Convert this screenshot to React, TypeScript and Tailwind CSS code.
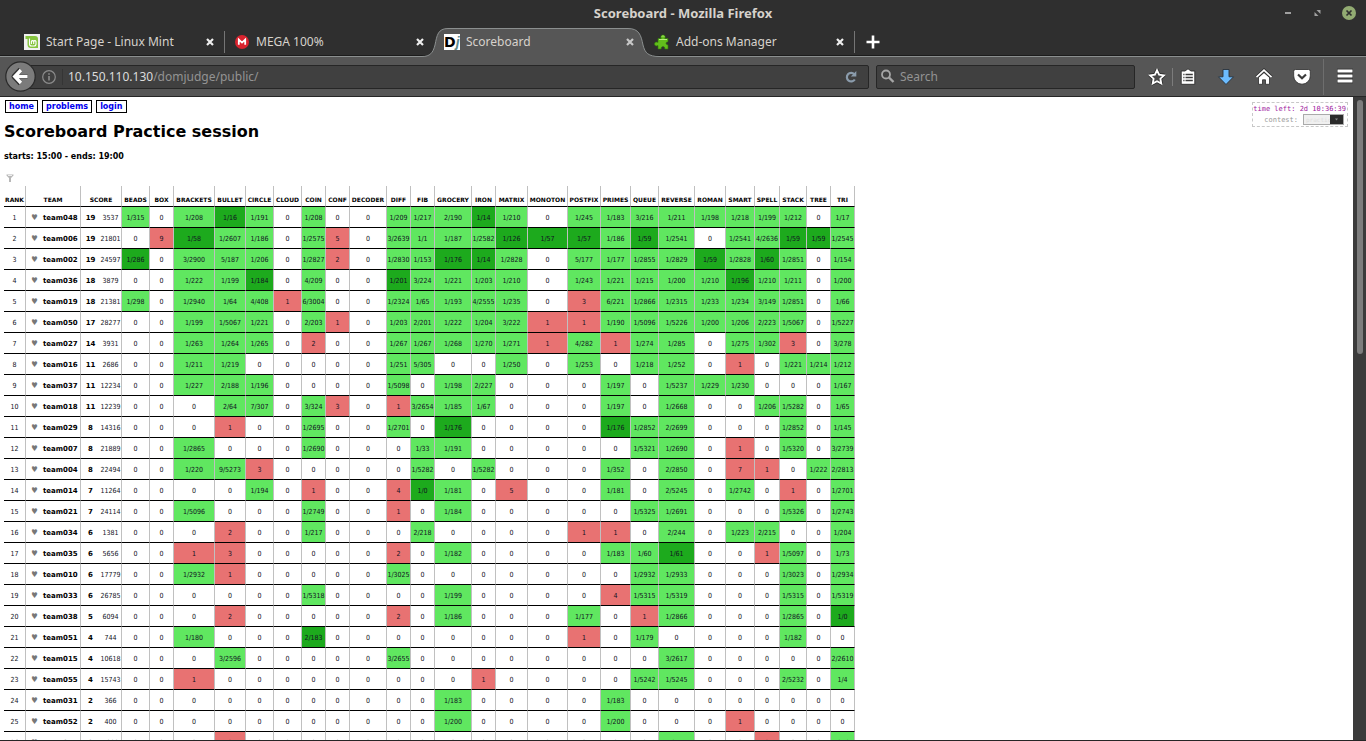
import type { ReactNode } from "react";

const PROBLEMS: [string, string][] = [
  ["BEADS", "w-[28px]"],
  ["BOX", "w-[24px]"],
  ["BRACKETS", "w-[41px]"],
  ["BULLET", "w-[31px]"],
  ["CIRCLE", "w-[28px]"],
  ["CLOUD", "w-[28px]"],
  ["COIN", "w-[24px]"],
  ["CONF", "w-[24px]"],
  ["DECODER", "w-[37px]"],
  ["DIFF", "w-[24px]"],
  ["FIB", "w-[24px]"],
  ["GROCERY", "w-[37px]"],
  ["IRON", "w-[24px]"],
  ["MATRIX", "w-[32px]"],
  ["MONOTON", "w-[40px]"],
  ["POSTFIX", "w-[33px]"],
  ["PRIMES", "w-[30px]"],
  ["QUEUE", "w-[28px]"],
  ["REVERSE", "w-[36px]"],
  ["ROMAN", "w-[31px]"],
  ["SMART", "w-[29px]"],
  ["SPELL", "w-[25px]"],
  ["STACK", "w-[27px]"],
  ["TREE", "w-[24px]"],
  ["TRI", "w-[24px]"],
];

// team, solved, time, then one result per problem.
// "tries/time" is solved, a leading * marks the first solver, a bare count is unsolved.
const ROWS = [
  "team048 19 3537 1/315 0 1/208 *1/16 1/191 0 1/208 0 0 1/209 1/217 2/190 *1/14 1/210 0 1/245 1/183 3/216 1/211 1/198 1/218 1/199 1/212 0 1/17",
  "team006 19 21801 0 9 *1/58 1/2607 1/186 0 1/2575 5 0 3/2639 1/1 1/187 1/2582 *1/126 *1/57 *1/57 1/186 *1/59 1/2541 0 1/2541 4/2636 *1/59 *1/59 1/2545",
  "team002 19 24597 *1/286 0 3/2900 5/187 1/206 0 1/2827 2 0 1/2830 1/153 *1/176 *1/14 1/2828 0 5/177 1/177 1/2855 1/2829 *1/59 1/2828 *1/60 1/2851 0 1/154",
  "team036 18 3879 0 0 1/222 1/199 *1/184 0 4/209 0 0 *1/201 3/224 1/221 1/203 1/210 0 1/243 1/221 1/215 1/200 1/210 *1/196 1/210 1/211 0 1/200",
  "team019 18 21381 1/298 0 1/2940 1/64 4/408 1 6/3004 0 0 1/2324 1/65 1/193 4/2555 1/235 0 3 6/221 1/2866 1/2315 1/233 1/234 3/149 1/2851 0 1/66",
  "team050 17 28277 0 0 1/199 1/5067 1/221 0 2/203 1 0 1/203 2/201 1/222 1/204 3/222 1 1 1/190 1/5096 1/5226 1/200 1/206 2/223 1/5067 0 1/5227",
  "team027 14 3931 0 0 1/263 1/264 1/265 0 2 0 0 1/267 1/267 1/268 1/270 1/271 1 4/282 1 1/274 1/285 0 1/275 1/302 3 0 3/278",
  "team016 11 2686 0 0 1/211 1/219 0 0 0 0 0 1/251 5/305 0 0 1/250 0 1/253 0 1/218 1/252 0 1 0 1/221 1/214 1/212",
  "team037 11 12234 0 0 1/227 2/188 1/196 0 0 0 0 1/5098 0 1/198 2/227 0 0 0 1/197 0 1/5237 1/229 1/230 0 0 0 1/167",
  "team018 11 12239 0 0 0 2/64 7/307 0 3/324 3 0 1 3/2654 1/185 1/67 0 0 0 1/197 0 1/2668 0 0 1/206 1/5282 0 1/65",
  "team029 8 14316 0 0 0 1 0 0 1/2695 0 0 1/2701 0 *1/176 0 0 0 0 *1/176 1/2852 2/2699 0 0 0 1/2852 0 1/145",
  "team007 8 21889 0 0 1/2865 0 0 0 1/2690 0 0 0 1/33 1/191 0 0 0 0 0 1/5321 1/2690 0 1 0 1/5320 0 3/2739",
  "team004 8 22494 0 0 1/220 9/5273 3 0 0 0 0 0 1/5282 0 1/5282 0 0 0 1/352 0 2/2850 0 7 1 0 1/222 2/2813",
  "team014 7 11264 0 0 0 0 1/194 0 1 0 0 4 *1/0 1/181 0 5 0 0 1/181 0 2/5245 0 1/2742 0 1 0 1/2701",
  "team021 7 24114 0 0 1/5096 0 0 0 1/2749 0 0 1 0 1/184 0 0 0 0 0 1/5325 1/2691 0 0 0 1/5326 0 1/2743",
  "team034 6 1381 0 0 0 2 0 0 1/217 0 0 0 2/218 0 0 0 0 1 1 0 2/244 0 1/223 2/215 0 0 1/204",
  "team035 6 5656 0 0 1 3 0 0 0 0 0 2 0 1/182 0 0 0 0 1/183 1/60 *1/61 0 0 1 1/5097 0 1/73",
  "team010 6 17779 0 0 1/2932 1 0 0 0 0 0 1/3025 0 0 0 0 0 0 0 1/2932 1/2933 0 0 0 1/3023 0 1/2934",
  "team033 6 26785 0 0 0 0 0 0 1/5318 0 0 0 0 1/199 0 0 0 0 4 1/5315 1/5319 0 0 0 1/5315 0 1/5319",
  "team038 5 6094 0 0 0 2 0 0 0 0 0 2 0 1/186 0 0 0 1/177 0 1 1/2866 0 0 0 1/2865 0 *1/0",
  "team051 4 744 0 0 1/180 0 0 0 *2/183 0 0 0 0 0 0 0 0 1 0 1/179 0 0 0 0 1/182 0 0",
  "team015 4 10618 0 0 0 3/2596 0 0 0 0 0 3/2655 0 0 0 0 0 0 0 0 3/2617 0 0 0 0 0 2/2610",
  "team055 4 15743 0 0 1 0 0 0 0 0 0 0 0 0 1 0 0 0 0 1/5242 1/5245 0 0 0 2/5232 0 1/4",
  "team031 2 366 0 0 0 0 0 0 0 0 0 0 0 1/183 0 0 0 0 1/183 0 0 0 0 0 0 0 0",
  "team052 2 400 0 0 0 0 0 0 0 0 0 0 0 1/200 0 0 0 0 1/200 0 0 0 1 0 0 0 0",
  "team017 2 5080 0 0 0 2 0 0 0 0 0 0 0 0 0 0 0 0 0 0 1/2477 0 0 2 0 0 1/2484",
].map((r) => r.split(" "));

function tone(v: string) {
  if (v === "0") return "";
  if (v.startsWith("*")) return "bg-[#1daa1d]";
  return v.includes("/") ? "bg-[#60e760]" : "bg-[#e87272]";
}

const MintIcon = () => (
  <svg width="16" height="16" viewBox="0 0 16 16">
    <rect width="16" height="16" fill="#f0f0f0" />
    <path d="M1.5 2H11a3 3 0 0 1 3 3v9H7a3.500 3.500 0 0 1-3.500-3.500V5h-2z" fill="#86c43f" />
    <path d="M5.500 4.500v5.500a2 2 0 0 0 2 2h2.500a2 2 0 0 0 2-2V7.500a1.200 1.200 0 0 0-2.300 0V10M9.700 7.500a1.200 1.200 0 0 0-2.300 0V10" fill="none" stroke="#fff" strokeWidth="1.100" />
  </svg>
);

const MegaIcon = () => (
  <svg width="16" height="16" viewBox="0 0 16 16">
    <circle cx="8" cy="8" r="7" fill="#d9232e" />
    <path d="M4.800 10.800V5.600L8 8.600l3.200-3v5.200" fill="none" stroke="#fff" strokeWidth="1.800" />
  </svg>
);

const DjIcon = () => (
  <span className="flex size-4 items-center overflow-hidden bg-white font-['DejaVu_Sans'] text-[14px] leading-4 font-bold text-black">
    D<i className="font-['Liberation_Sans'] text-[14px] font-bold text-[#5f8a8c]">j</i>
  </span>
);

const AddonIcon = () => (
  <svg width="16" height="16" viewBox="0 0 16 16">
    <path
      d="M4 4.500h3.200C6.600 3.600 6.500 1 9 1s2.500 2.600 1.800 3.500H14v3.200c-.8.300-2 .3-2 1.600s1.200 1.300 2 1.600V15h-3.200c.3-1.500-.4-2.500-1.800-2.500S7 13.500 7.200 15H4v-3.500C3 12.200.500 12.200.500 10S3 7.800 4 8.500z"
      fill="#62bd1c"
      stroke="#2f7a08"
      strokeWidth=".6"
    />
    <path d="M7.800 2.600a1.400 1.400 0 0 1 2.400 0M5 5.500h8" stroke="#b6ec7c" strokeWidth="1" fill="none" />
  </svg>
);

function Tab({ icon, title, active, divider }: { icon: ReactNode; title: string; active?: boolean; divider?: boolean }) {
  return (
    <div role="tab" aria-selected={!!active} className="relative h-[29px] w-[210px] shrink-0">
      {active && (
        <svg className="absolute top-0 -left-[12px]" width="238" height="30" viewBox="0 0 238 30">
          <path
            d="M0 28.500C8 28.500 11 25 13 17C15 7 16 .5 26 .5H206C217 .5 219 7 221 17C223 25 226 28.500 238 28.500V30H0Z"
            fill="#565656"
          />
          <path
            d="M0 28.500C8 28.500 11 25 13 17C15 7 16 .5 26 .5H206C217 .5 219 7 221 17C223 25 226 28.500 238 28.500"
            fill="none"
            stroke="#8b8f8f"
          />
        </svg>
      )}
      <div className="relative flex h-7 items-center gap-1.5 pr-2.5 pl-2.5">
        {icon}
        <span className="flex-1 text-[12px] whitespace-nowrap text-[#d6d2cc]">{title}</span>
        <button aria-label="Close tab" className="flex size-2 items-center justify-center">
          <svg width="8" height="8" viewBox="0 0 8 8" className="shrink-0">
            <path d="M1 1l6 6M7 1L1 7" stroke={active ? "#c8c8c8" : "#eee"} strokeWidth="2.200" />
          </svg>
        </button>
      </div>
      {divider && <span className="absolute top-[3px] -right-px h-[22px] w-px bg-[#757575]" />}
    </div>
  );
}

function IconButton({ label, children }: { label: string; children: ReactNode }) {
  return (
    <button aria-label={label} className="flex w-[18px] items-center justify-center">
      {children}
    </button>
  );
}

function Chrome() {
  return (
    <header className="shrink-0 bg-[#2f2f2f] font-['Noto_Sans',sans-serif]">
      <div className="relative flex h-7 items-center justify-center">
        <h2 className="text-[13px] font-bold text-[#d6d2cc]">Scoreboard - Mozilla Firefox</h2>
        <div className="absolute top-[6px] right-[10px] flex items-center gap-[21px]">
          <button aria-label="Minimize">
            <svg width="8" height="14" viewBox="0 0 8 14">
              <path d="M1 7h6" stroke="#a0a0a0" strokeWidth="2" />
            </svg>
          </button>
          <button aria-label="Restore">
            <svg width="8" height="14" viewBox="0 0 8 14">
              <path d="M3.500 4h4v4zM1.500 6v4h4z" fill="#a0a0a0" />
            </svg>
          </button>
          <button aria-label="Close">
            <svg width="14" height="14" viewBox="0 0 14 14">
              <circle cx="7" cy="7" r="7" fill="#92ab72" />
              <path d="M4.500 4.500l5 5M9.500 4.500l-5 5" stroke="#2f2f2f" strokeWidth="1.700" />
            </svg>
          </button>
        </div>
      </div>

      <div role="tablist" className="relative flex h-[29px] pl-[14px]">
        <span className="absolute inset-x-0 bottom-px h-px bg-[#1c1c1c]" />
        <span className="absolute inset-x-0 bottom-0 h-px bg-[#8b8f8f]" />
        <Tab icon={<MintIcon />} title="Start Page - Linux Mint" divider />
        <Tab icon={<MegaIcon />} title="MEGA 100%" />
        <Tab icon={<DjIcon />} title="Scoreboard" active />
        <Tab icon={<AddonIcon />} title="Add-ons Manager" divider />
        <button aria-label="New tab" className="ml-px flex h-7 w-9 items-center justify-center">
          <svg width="14" height="14" viewBox="0 0 14 14">
            <path d="M7 .5v13M.5 7h13" stroke="#fff" strokeWidth="2.600" />
          </svg>
        </button>
      </div>

      <div className="flex h-10 items-center border-b border-[#262626] bg-[#565656] pr-3 pl-[5px]">
        <button aria-label="Back" className="relative z-10 shrink-0">
          <svg width="31" height="31" viewBox="0 0 31 31">
            <circle cx="15.500" cy="15.500" r="14.700" fill="#7b7b7b" stroke="#292929" strokeWidth="1.200" />
            <path d="M15.500 8.500l-6.500 7 6.500 7M9.500 15.500H22.500" fill="none" stroke="#333" strokeWidth="5" strokeLinejoin="round" />
            <path d="M16 9l-6.200 6.500L16 22M10 15.500h12.500" fill="none" stroke="#fff" strokeWidth="3.400" />
          </svg>
        </button>
        <div className="-ml-4 flex h-6 flex-1 items-center rounded-[2px] border border-[#262626] bg-[#404040] pr-2.5 pl-5">
          <svg width="16" height="16" viewBox="0 0 16 16" className="shrink-0">
            <circle cx="8" cy="8" r="6.300" fill="none" stroke="#8c8c8c" strokeWidth="1.200" />
            <path d="M8 7v4.500M8 4.200v1.600" stroke="#8c8c8c" strokeWidth="1.600" />
          </svg>
          <span className="ml-[5px] h-4 w-px bg-[#353535]" />
          <div className="ml-[5px] flex-1 text-[12px] whitespace-nowrap text-[#939393]">
            <span className="text-[#dcdcdc]">10.150.110.130</span>/domjudge/public/
          </div>
          <button aria-label="Reload">
            <svg width="14" height="14" viewBox="0 0 14 14">
              <path d="M10.300 4.200A4.300 4.300 0 1 0 10.800 9.500" fill="none" stroke="#8b9cac" strokeWidth="2.200" />
              <path d="M12.300 1v5.600H6.800z" fill="#8b9cac" />
            </svg>
          </button>
        </div>
        <div className="ml-[7px] flex h-6 w-[259px] items-center rounded-[2px] border border-[#262626] bg-[#404040] pl-[3px]">
          <svg width="15" height="15" viewBox="0 0 15 15" className="shrink-0">
            <circle cx="6" cy="5.500" r="4" fill="none" stroke="#a6a6a6" strokeWidth="1.800" />
            <path d="M9 8.500l4.500 4.500" stroke="#a6a6a6" strokeWidth="2.400" />
          </svg>
          <input
            aria-label="Search"
            placeholder="Search"
            className="ml-[5px] w-full bg-transparent text-[12px] outline-none placeholder:text-[#939393]"
          />
        </div>
        <div className="ml-[13px] flex h-9 items-center">
          <IconButton label="Bookmark this page">
            <svg width="18" height="18" viewBox="0 0 18 18" className="shrink-0">
              <path
                d="M9 2.200l2.100 4.500 4.900.6-3.600 3.400.9 4.900L9 13.200l-4.300 2.400.9-4.900L2 7.300l4.900-.6z"
                fill="none"
                stroke="#2b2b2b"
                strokeWidth="3.400"
                strokeLinejoin="round"
              />
              <path
                d="M9 2.200l2.100 4.500 4.900.6-3.600 3.400.9 4.900L9 13.200l-4.300 2.400.9-4.900L2 7.300l4.900-.6z"
                fill="#4a4a4a"
                stroke="#fff"
                strokeWidth="1.800"
              />
            </svg>
          </IconButton>
          <span className="ml-[6px] h-[18px] w-px bg-[#7c7c7c]" />
          <span className="w-[6px]" />
          <IconButton label="Bookmarks list">
            <svg width="18" height="18" viewBox="0 0 18 18" className="shrink-0">
              <path d="M6 3L9 .8 12 3h3.800v13.300H2.200V3z" fill="#fff" stroke="#2b2b2b" strokeWidth=".9" />
              <path d="M4.300 6.500h1.200M4.300 9.500h1.200M4.300 12.500h1.200M6.500 6.500h7.300M6.500 9.500h7.300M6.500 12.500h7.300" stroke="#3b3b3b" strokeWidth="1.300" />
            </svg>
          </IconButton>
          <span className="w-5" />
          <IconButton label="Downloads">
            <svg width="18" height="18" viewBox="0 0 18 18" className="shrink-0">
              <path d="M6 1.500h6v7.300h4.500L9 16.500 1.500 8.800H6z" fill="#6cbcff" stroke="#29323b" strokeWidth=".9" strokeLinejoin="round" />
            </svg>
          </IconButton>
          <span className="w-5" />
          <IconButton label="Home">
            <svg width="18" height="18" viewBox="0 0 18 18" className="shrink-0">
              <path d="M3.500 9.500L9 4.600l5.500 4.900v6.800h-4v-4.500h-3v4.500h-4z" fill="#fff" stroke="#2b2b2b" strokeWidth=".8" />
              <path d="M1.500 9.200L9 2.200l7.500 7" fill="none" stroke="#2b2b2b" strokeWidth="3.200" />
              <path d="M1.500 9.200L9 2.200l7.500 7" fill="none" stroke="#fff" strokeWidth="1.800" />
            </svg>
          </IconButton>
          <span className="w-5" />
          <IconButton label="Pocket">
            <svg width="18" height="18" viewBox="0 0 18 18" className="shrink-0">
              <path d="M2.500 1.500h13a1.800 1.800 0 0 1 1.800 1.800v4.600a8.300 8.300 0 0 1-16.600 0V3.300a1.800 1.800 0 0 1 1.800-1.800z" fill="#fff" stroke="#2b2b2b" strokeWidth=".8" />
              <path d="M5 6.500l4 3.800 4-3.800" fill="none" stroke="#3b3b3b" strokeWidth="2.200" />
            </svg>
          </IconButton>
          <span className="ml-3 h-9 w-px bg-[#6e6e6e]" />
          <span className="w-[12px]" />
          <IconButton label="Open menu">
            <svg width="18" height="18" viewBox="0 0 18 18" className="shrink-0">
              <path d="M1 3h16M1 8h16M1 13h16" stroke="#2b2b2b" strokeWidth="4.400" />
              <path d="M1.500 3h15M1.500 8h15M1.500 13h15" stroke="#fff" strokeWidth="3" />
            </svg>
          </IconButton>
        </div>
      </div>
    </header>
  );
}

const CELL = "border-r border-b border-r-[#c0c0c0] border-b-black p-0 text-center whitespace-nowrap";

function Scoreboard() {
  return (
    <table className="mt-1 w-px table-fixed border-separate border-spacing-0 font-['DejaVu_Sans_Condensed','DejaVu_Sans',sans-serif] text-[7px] leading-[8px] text-[#112]">
      <colgroup>
        <col className="w-[22px]" />
        <col className="w-[17px]" />
        <col className="w-[38px]" />
        <col className="w-[19px]" />
        <col className="w-[22px]" />
        {PROBLEMS.map(([name, width]) => (
          <col key={name} className={width} />
        ))}
      </colgroup>
      <thead>
        <tr className="h-[21px] font-['DejaVu_Sans',sans-serif] text-[6px] font-bold text-black">
          <th className={`${CELL} pt-2`}>RANK</th>
          <th colSpan={2} className={`${CELL} pt-2`}>TEAM</th>
          <th colSpan={2} className={`${CELL} pt-2`}>SCORE</th>
          {PROBLEMS.map(([name]) => (
            <th key={name} className={`${CELL} pt-2`}>
              <div className="flex justify-center">{name}</div>
            </th>
          ))}
        </tr>
      </thead>
      <tbody>
        {ROWS.map(([team, solved, time, ...results], i) => (
          <tr key={team} className="h-[21px]">
            <td className={`${CELL} pt-[2px]`}>{i + 1}</td>
            <td className="border-b border-black p-0 pt-[2px] text-center text-[8px] text-[#777]">♥</td>
            <td className="border-r border-b border-r-[#c0c0c0] border-b-black p-0 pt-[2px] text-left font-['DejaVu_Sans',sans-serif] font-bold text-black">
              {team}
            </td>
            <td className="border-b border-black p-0 pt-[2px] text-center font-['DejaVu_Sans',sans-serif] font-bold text-black">
              {solved}
            </td>
            <td className={`${CELL} pt-[2px]`}>
              <div className="flex justify-center">{time}</div>
            </td>
            {results.map((v, j) => (
              <td key={j} className={`${CELL} pt-[2px] ${tone(v)}`}>
                <div className="flex justify-center">{v.replace("*", "")}</div>
              </td>
            ))}
          </tr>
        ))}
      </tbody>
    </table>
  );
}

export default function App() {
  return (
    <div className="flex h-screen flex-col overflow-hidden bg-white">
      <Chrome />
      <div className="flex min-h-0 flex-1 border-b border-[#262626]">
        <main className="relative min-w-0 flex-1 overflow-hidden pt-[3px] pl-1 font-['DejaVu_Sans',sans-serif] text-black">
          <nav className="flex gap-1 pl-px text-[8px] leading-[11px] font-bold text-[#0000ee]">
            {["home", "problems", "login"].map((label) => (
              <a key={label} href={`#${label}`} className="border border-black px-[3px]">
                {label}
              </a>
            ))}
          </nav>
          <h1 className="mt-[9px] text-[16px] leading-5 font-bold">Scoreboard Practice session</h1>
          <p className="mt-[9px] text-[8px] leading-3 font-bold">starts: 15:00 - ends: 19:00</p>
          <button aria-label="Filter" className="mt-[11px] ml-[2px] block">
            <svg width="8" height="8" viewBox="0 0 8 8">
              <path d="M.5.500h7v1L5 4v4H3V4L.5 1.500z" fill="#b8b8b8" />
              <path d="M2 1.500h4" stroke="#eee" />
            </svg>
          </button>
          <Scoreboard />
          <div className="absolute top-[5px] right-[5px] flex flex-col items-end border border-dashed border-[#c8c8c8] font-['DejaVu_Sans_Mono',monospace] text-[7px] leading-[10px]">
            <span className="mt-px pr-px text-[#a020a0]">time left: 2d 10:36:39</span>
            <div className="flex items-center gap-[5px] pr-[3px] pb-px">
              <label htmlFor="contest" className="text-[#999]">contest:</label>
              <span className="flex h-[11px] w-[41px] border border-[#aaa] bg-[#f0f0f0]">
                <select id="contest" className="w-[26px] appearance-none pl-[2px] text-[6px] leading-[8px] text-[#ddd] outline-none">
                  <option>practice</option>
                </select>
                <svg width="13" height="9" viewBox="0 0 13 9">
                  <rect width="13" height="9" fill="#2b2b2b" />
                  <path d="M5 3.500h3L6.500 5.500z" fill="#888" />
                </svg>
              </span>
            </div>
          </div>
        </main>
        <div className="flex w-[13px] shrink-0 flex-col items-center bg-[#3b3b3b] pt-[3px]">
          <div className="h-[254px] w-[6px] rounded-full bg-[#7d7d7d]" />
        </div>
      </div>
    </div>
  );
}
